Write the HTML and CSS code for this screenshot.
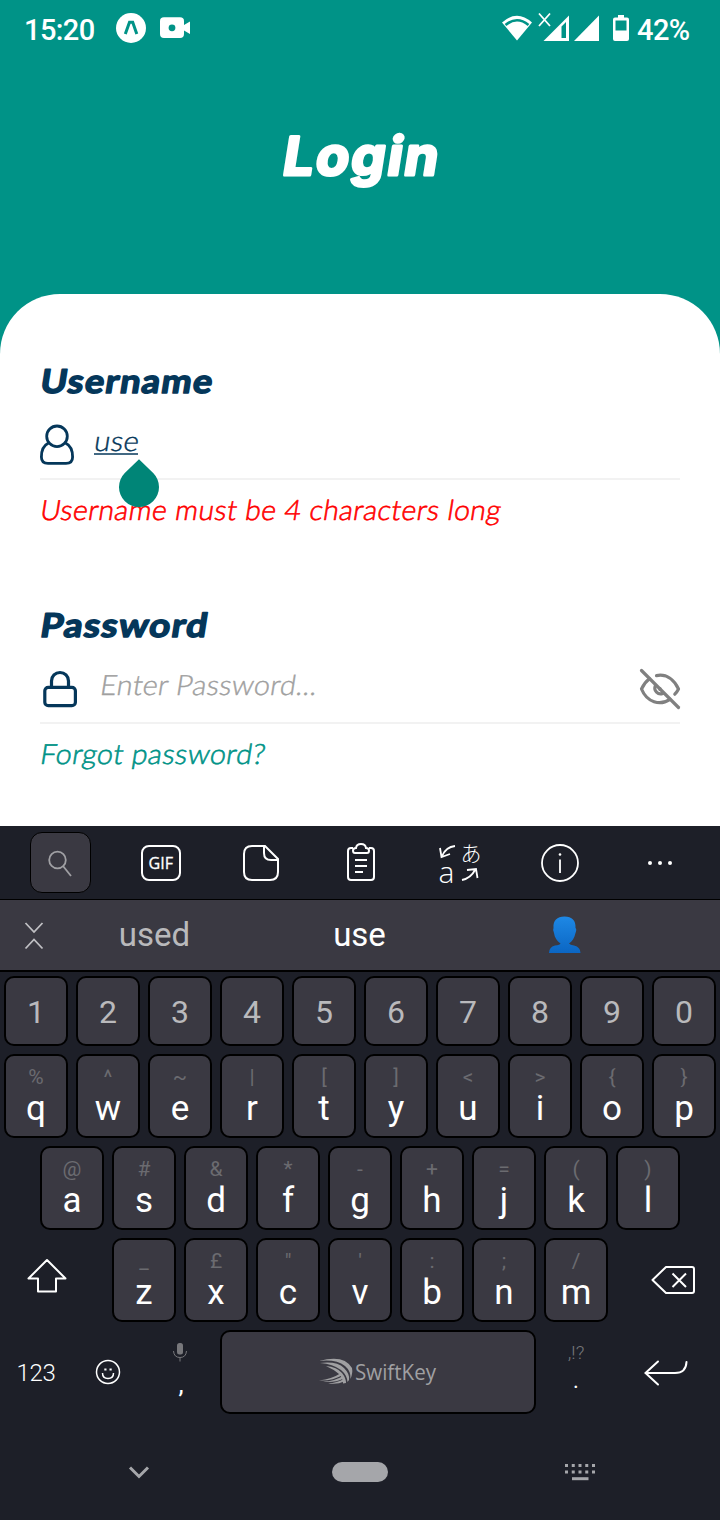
FILE: index.html
```html
<!DOCTYPE html>
<html lang="en">
<head>
<meta charset="utf-8">
<title>Login</title>
<link rel="stylesheet" href="styles.css">
</head>
<body>
<header class="header">
  <div class="status">
    <span class="clock">15:20</span>
    <svg class="status-left" width="76" height="32" viewBox="115 12 76 32">
      <circle cx="131" cy="28" r="15" fill="#fff"/>
      <path d="M125.300 34L129.500 22.200H132.700L136.800 34" fill="none" stroke="#009387" stroke-width="3"/>
      <path d="M164 17.300H180Q184 17.300 184 21V25L190 21.500V34L184 30.500V34Q184 38 180 38H164Q160 38 160 34V21Q160 17.300 164 17.300Z" fill="#fff"/>
      <circle cx="172" cy="27.800" r="3.400" fill="#009387"/>
    </svg>
    <svg class="status-right" width="130" height="36" viewBox="501 10 130 36">
      <path d="M502 22.500Q517 9 532 22.500L517 40.500Z" fill="#fff"/>
      <path d="M505.500 25Q517 15.500 528.500 25" fill="none" stroke="#009387" stroke-width="2.600"/>
      <path d="M539 13.500L550 26M550 13.500L539 26" stroke="#fff" stroke-width="1.800"/>
      <path fill-rule="evenodd" d="M543.500 41L569 15.500V41ZM561.500 26.500V38H566V22Z" fill="#fff"/>
      <path d="M574 41L599 15.500V41Z" fill="#fff"/>
      <path fill-rule="evenodd" d="M618 15H624V17.500H627Q629 17.500 629 19.500V39Q629 41 627 41H615Q613 41 613 39V19.500Q613 17.500 615 17.500H618ZM615.500 20.500V30.500H626.500V20.500Z" fill="#fff"/>
    </svg>
    <span class="battery">42%</span>
  </div>
  <svg class="title" width="720" height="100"><text class="t-title" transform="translate(281 65) skewX(-9)" textLength="157" lengthAdjust="spacingAndGlyphs">Login</text></svg>
</header>

<main class="card">
  <section class="group">
    <svg class="label" width="640" height="44"><text class="t-label" transform="translate(-1 32.500) skewX(-9)" textLength="173" lengthAdjust="spacingAndGlyphs">Username</text></svg>
    <div class="field">
      <svg class="field-icon" width="40" height="44" viewBox="40 423 40 44" fill="none" stroke="#05375a" stroke-width="2.800">
        <circle cx="57" cy="436.300" r="10.300"/>
        <path d="M48.500 443Q41.400 446.500 41.400 457Q41.400 463.400 48 463.400H66Q72.600 463.400 72.600 457Q72.600 446.500 65.500 443"/>
      </svg>
      <svg class="value" width="400" height="74"><text class="t-value" transform="translate(-1 47) skewX(-9)" textLength="45" lengthAdjust="spacingAndGlyphs">use</text><path d="M0 50H44" stroke="#05375a" stroke-width="1.500"/></svg>
      <svg class="handle" width="42" height="50" viewBox="118 458 42 50"><path d="M139 459.300L153.200 473A20 20 0 1 1 124.800 473Z" fill="#008577"/></svg>
    </div>
    <svg class="note" width="640" height="60"><text class="t-note error" transform="translate(-1 40) skewX(-9)" textLength="461" lengthAdjust="spacingAndGlyphs">Username must be 4 characters long</text></svg>
  </section>

  <section class="group">
    <svg class="label" width="640" height="44"><text class="t-label" transform="translate(-1 32.500) skewX(-9)" textLength="168" lengthAdjust="spacingAndGlyphs">Password</text></svg>
    <div class="field">
      <svg class="field-icon" width="40" height="44" viewBox="40 667 40 44" fill="none" stroke="#05375a" stroke-width="3.200">
        <rect x="44.800" y="687.300" width="30.600" height="18.400" rx="3.500"/>
        <path d="M51.500 687V681A8.500 8.500 0 0 1 68.500 681V687"/>
      </svg>
      <svg class="value" width="400" height="74"><text class="t-value hint" transform="translate(5 47) skewX(-9)" textLength="217" lengthAdjust="spacingAndGlyphs">Enter Password...</text></svg>
      <svg class="eye" width="42" height="44" viewBox="639 667 42 44" fill="none" stroke="#808080" stroke-width="3.200" stroke-linecap="round" stroke-linejoin="round">
        <path d="M656.500 675.600C667 673.500 674.500 680.500 678.500 689Q677 692 674.800 694.200"/>
        <path d="M649.500 678.800Q644.300 682.700 641.500 689C647 702.500 660 706 670 699.300"/>
        <path d="M655.400 685.600A5.700 5.700 0 0 0 663 693.200M660 688.500V689.500"/>
        <path d="M641.500 670.500L678.500 707.500"/>
      </svg>
    </div>
    <svg class="note" width="640" height="60"><text class="t-note link" transform="translate(-1 40) skewX(-9)" textLength="225" lengthAdjust="spacingAndGlyphs">Forgot password?</text></svg>
  </section>
</main>

<section class="keyboard">
  <div class="tools">
    <div class="tool"><div class="search"><svg width="30" height="30" viewBox="45 847 30 30" fill="none" stroke="#a0a0a4" stroke-width="1.800"><circle cx="57.500" cy="859" r="8.300"/><path d="M63 865L71 875"/></svg></div></div>
    <div class="tool"><svg width="44" height="44" viewBox="138 841 44 44"><rect x="142" y="846" width="38" height="34" rx="7" fill="none" stroke="#fff" stroke-width="2"/><text class="gif" x="148.500" y="869" textLength="24.500" lengthAdjust="spacingAndGlyphs">GIF</text></svg></div>
    <div class="tool"><svg width="44" height="44" viewBox="238 841 44 44" fill="none" stroke="#fff" stroke-width="2"><path d="M265 846H252Q244 846 244 854V872Q244 880 252 880H270Q278 880 278 872V859Z"/><path d="M264 846V853Q264 860 271 860H278"/></svg></div>
    <div class="tool"><svg width="44" height="46" viewBox="338 840 44 46" fill="none" stroke="#fff" stroke-width="2"><path d="M353 848H351Q348 848 348 851V877Q348 880 351 880H371Q374 880 374 877V851Q374 848 371 848H369"/><path d="M355 853Q353 853 353 850.500Q353 848 356 848Q356.500 844 361 844Q365.500 844 366 848Q369 848 369 850.500Q369 853 367 853Z"/><path d="M355 860H367M355 866H367M355 872H363"/></svg></div>
    <div class="tool"><svg width="46" height="46" viewBox="437 840 46 46"><g fill="none" stroke="#fff" stroke-width="1.800"><path d="M455 846Q446 847 442 856M440 848L441.500 857L450 854"/><path d="M462 880Q471 878 475 870M467 870L476 869L477.500 878"/></g><text class="kana" x="460.500" y="860.500">あ</text><text class="latin" x="438.500" y="882.500">a</text></svg></div>
    <div class="tool"><svg width="44" height="44" viewBox="538 841 44 44"><circle cx="560" cy="863" r="18" fill="none" stroke="#fff" stroke-width="1.800"/><path d="M560 859.500V873" stroke="#fff" stroke-width="1.800"/><circle cx="560" cy="854.500" r="1.300" fill="#fff"/></svg></div>
    <div class="tool"><svg width="44" height="44" viewBox="638 841 44 44" fill="#fff"><circle cx="650" cy="863" r="2"/><circle cx="660" cy="863" r="2"/><circle cx="670" cy="863" r="2"/></svg></div>
  </div>
  <div class="suggest">
    <svg class="collapse" width="68" height="70" viewBox="0 900 68 70" fill="none" stroke="#c0c0c4" stroke-width="1.800"><path d="M25.500 923L34 932L42.500 923M25.500 948.500L34 939.500L42.500 948.500"/></svg>
    <span class="word dim">used</span>
    <span class="word">use</span>
    <span class="word"><svg class="person" width="34" height="38" viewBox="548 916 34 38"><defs><linearGradient id="blue" x1="0" y1="0" x2="0" y2="1"><stop offset="0" stop-color="#1e88e5"/><stop offset="1" stop-color="#0b66c3"/></linearGradient></defs><path d="M564.500 916.500C572 916.500 576 920.500 575.500 928Q577 929 575.500 933C574.500 938 572 941.500 569 943.500Q570 945 574 945.500Q580.500 947 580.500 953H549Q549 947 555 945.500Q560 945 560.500 943.500C557 941 554.500 937.500 554 933Q552.500 930 553.500 928C553 920.500 557 916.500 564.500 916.500Z" fill="url(#blue)"/></svg></span>
  </div>
  <div class="keys">
    <div class="row numbers">
      <div class="key">1</div><div class="key">2</div><div class="key">3</div><div class="key">4</div><div class="key">5</div><div class="key">6</div><div class="key">7</div><div class="key">8</div><div class="key">9</div><div class="key">0</div>
    </div>
    <div class="row">
      <div class="key"><small>%</small>q</div><div class="key"><small>^</small>w</div><div class="key"><small>~</small>e</div><div class="key"><small>|</small>r</div><div class="key"><small>[</small>t</div><div class="key"><small>]</small>y</div><div class="key"><small>&lt;</small>u</div><div class="key"><small>&gt;</small>i</div><div class="key"><small>{</small>o</div><div class="key"><small>}</small>p</div>
    </div>
    <div class="row">
      <div class="key"><small>@</small>a</div><div class="key"><small>#</small>s</div><div class="key"><small>&amp;</small>d</div><div class="key"><small>*</small>f</div><div class="key"><small>-</small>g</div><div class="key"><small>+</small>h</div><div class="key"><small>=</small>j</div><div class="key"><small>(</small>k</div><div class="key"><small>)</small>l</div>
    </div>
    <div class="row">
      <svg class="wide" width="100" height="84" viewBox="4 1238 100 84" fill="none" stroke="#fff" stroke-width="2" stroke-linejoin="round"><path d="M47 1260L28.500 1278.500H38V1291.500H56V1278.500H65.500Z"/></svg>
      <div class="key"><small>_</small>z</div><div class="key"><small>£</small>x</div><div class="key"><small>"</small>c</div><div class="key"><small>'</small>v</div><div class="key"><small>:</small>b</div><div class="key"><small>;</small>n</div><div class="key"><small>/</small>m</div>
      <svg class="wide" width="100" height="84" viewBox="616 1238 100 84" fill="none" stroke="#fff" stroke-width="2" stroke-linejoin="round"><path d="M652.500 1280L666 1267H692Q694 1267 694 1269V1291Q694 1293 692 1293H666ZM672.500 1273.500L686 1287M686 1273.500L672.500 1287"/></svg>
    </div>
    <div class="row">
      <div class="plain mode">123</div>
      <div class="plain"><svg width="30" height="30" viewBox="93 1357 30 30" fill="none" stroke="#fff" stroke-width="1.500"><circle cx="108" cy="1372" r="11.500"/><path d="M102.500 1373Q102.500 1378.500 108 1378.500Q113.500 1378.500 113.500 1373"/><path d="M104.300 1369.500H106.500M109.500 1369.500H111.700" stroke-width="2.200"/></svg></div>
      <div class="plain comma"><svg width="18" height="22" viewBox="171 1341 18 22"><rect x="177" y="1343" width="6" height="11.500" rx="2.500" fill="#77777b"/><path d="M173.500 1351Q174 1357.500 180 1357.500Q186 1357.500 186.500 1351M180 1358V1361.500" fill="none" stroke="#77777b"/></svg><span>,</span></div>
      <div class="key space"><svg width="120" height="30" viewBox="318 1357 120 30"><g fill="#a0a0a2"><path d="M319 1361Q344 1354 352 1368Q353 1373 350.500 1379Q351 1371 345 1366Q336 1359 319 1361Z"/><path d="M320 1363Q337 1361 344 1368Q350 1374 349 1380L347.500 1382Q347 1375 341 1370Q333 1364 320 1363Z"/><path d="M326 1366Q337 1367 342 1373Q346 1378 346 1383L343 1383.500Q343 1378 339 1374Q333 1369 326 1366Z"/><path d="M319 1380.500Q332 1379 341 1373L342.500 1375Q333 1381 319 1380.500Z"/><path d="M323 1381.800Q335 1381 343 1376L344 1378.200Q335 1383 323 1381.800Z"/><path d="M328 1383.300Q337 1383 344 1379L344.500 1381.200Q337 1385 328 1383.300Z"/></g><text class="brand" x="355" y="1380" textLength="81" lengthAdjust="spacingAndGlyphs">SwiftKey</text></svg></div>
      <div class="plain period"><small>,!?</small><span>.</span></div>
      <svg class="wide" width="100" height="84" viewBox="616 1330 100 84" fill="none" stroke="#fff" stroke-width="2" stroke-linecap="round"><path d="M658 1361.500L645.500 1373L658 1384.500M645.500 1373H675Q686 1373 686.500 1362"/></svg>
    </div>
  </div>
  <nav class="nav">
    <svg width="24" height="16" viewBox="127 1464 24 16" fill="none" stroke="#a5a6aa" stroke-width="3"><path d="M130 1467.500L139 1476.500L148 1467.500"/></svg>
    <div class="home"></div>
    <svg width="32" height="20" viewBox="564 1462 32 20" fill="none" stroke="#a5a6aa" stroke-width="3"><path d="M565 1465.500H595M565 1472H595" stroke-dasharray="3 3.750"/><path d="M572 1478.700H588.500"/></svg>
  </nav>
</section>
</body>
</html>
```
FILE: styles.css
```css
* { box-sizing: border-box; }
body {
  margin: 0;
  width: 720px;
  height: 1520px;
  overflow: hidden;
  background: #009387;
  color: #fff;
  font-family: Roboto, "Liberation Sans", sans-serif;
}
svg { display: block; flex: none; overflow: visible; }
.header { height: 294px; }
.status { display: flex; height: 56px; align-items: center; padding: 0 0 0 24px; font-size: 29px; font-weight: 500; }
.clock, .battery { line-height: 34px; padding-top: 3px; letter-spacing: -0.6px; }
.clock { width: 91px; }
.status-right { margin-left: 310px; }
.battery { margin-left: 6px; }
.title { margin-top: 54px; }

.t-title, .t-label, .t-value, .t-note { font-family: Lato, "Noto Sans", sans-serif; }
.t-title { font-family: Inter, sans-serif; font-size: 53px; font-weight: 700; letter-spacing: 2px; fill: #fff; stroke: #fff; stroke-width: 3; stroke-linejoin: round; }
.t-label { font-size: 33px; font-weight: 700; letter-spacing: 1.2px; fill: #05375a; stroke: #05375a; stroke-width: 1.5; stroke-linejoin: round; }
.t-value { font-size: 28px; font-weight: 300; letter-spacing: 0.3px; fill: #05375a; stroke: #05375a; stroke-width: .4; }
.t-value.hint { fill: #a0a0a0; stroke: #a0a0a0; }
.t-note { font-size: 28px; font-weight: 300; letter-spacing: 0.4px; stroke-width: .6; stroke-linejoin: round; }
.error { fill: #f00; stroke: #f00; }
.link { fill: #009387; stroke: #009387; }

.card { height: 532px; padding: 66px 40px 0; background: #fff; border-radius: 60px 60px 0 0; }
.group { height: 244px; }
.field { position: relative; display: flex; gap: 14px; height: 76px; border-bottom: 2px solid #f2f2f2; }
.field-icon, .eye { margin-top: 19px; }
.eye { margin-left: auto; margin-right: -1px; }
.handle { position: absolute; left: 78px; top: 54px; }

.keyboard { height: 694px; background: #1d1f28; }
.tools { display: flex; height: 74px; padding: 0 10px; border-bottom: 1px solid #000; }
.tool { display: flex; flex: 1; align-items: center; justify-content: center; }
.search { display: flex; align-items: center; justify-content: center; width: 61px; height: 61px; background: #3a3942; border: 1px solid #000; border-radius: 12px; }
.gif { font: 400 16.5px "Open Sans", sans-serif; fill: #fff; stroke: #fff; stroke-width: .3; }
.kana { font: 300 21px "Noto Sans CJK JP", sans-serif; fill: #fff; }
.latin { font: 300 30px "Open Sans", sans-serif; fill: #fff; }
.suggest { display: flex; align-items: center; height: 72px; background: #3a3942; border-bottom: 2px solid #000; }
.word { display: flex; justify-content: center; width: 205px; margin-top: -2px; font-size: 33px; }
.person { margin-top: 1px; }
.collapse { margin-right: -16px; }
.dim { color: #b9b9bc; }

.keys { display: flex; flex-direction: column; gap: 8px; padding: 4px 4px 0; }
.row { display: flex; justify-content: center; gap: 8px; height: 84px; }
.key { position: relative; display: flex; flex: none; justify-content: center; width: 64px; padding: 32px 0 0; font-size: 35px; line-height: 42px; background: #3a3942; border: 2px solid #000; border-radius: 10px; }
.key small { position: absolute; top: 8px; left: 0; width: 100%; text-align: center; font-size: 21px; line-height: 26px; color: #6b6b70; }
.numbers { height: 70px; }
.numbers .key { padding-top: 14px; font-size: 32px; color: #b9b9bc; line-height: 40px; }
.plain { display: flex; align-items: center; justify-content: center; width: 64px; }
.mode { padding-top: 2px; font-size: 24px; font-weight: 300; letter-spacing: -0.3px; }
.comma, .period { flex-direction: column; justify-content: flex-start; padding-top: 11px; font-size: 26px; line-height: 30px; }
.comma span { margin: 6px 0 0 2px; }
.period small { font-size: 19px; font-weight: 300; line-height: 24px; color: #77777b; }
.period span { margin-top: 1px; font-size: 22px; }
.key.space { width: 316px; padding: 0; align-items: center; }
.brand { font: 400 21.500px "Open Sans", sans-serif; fill: #a0a0a2; }
.nav { display: flex; justify-content: space-between; align-items: center; height: 20px; margin-top: 48px; padding: 0 124px 0 127px; }
.home { width: 56px; height: 20px; margin-left: 4px; border-radius: 10px; background: #a5a6aa; }
```
